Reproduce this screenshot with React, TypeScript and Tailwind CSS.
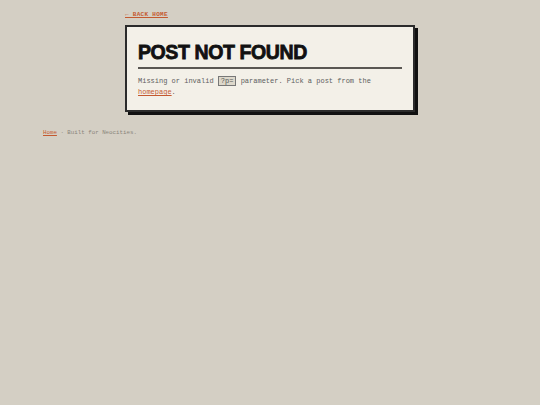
import React from "react";

export default function App() {
  const mono = { fontFamily: '"Liberation Mono", "Courier New", monospace' };
  return (
    <div className="min-h-[405px] w-full bg-[#d4cfc4]" style={mono}>
      <div className="mx-auto w-[290px] pt-[11px]">
        <a className="block text-[6px] leading-[8px] font-bold tracking-[0.3px] text-[#c4592f] underline underline-offset-[1px]">
          ← BACK HOME
        </a>
        <div className="mt-[6px] w-[290px] border-2 border-[#2b2b2b] bg-[#f3f0e8] px-[11px] pt-[14px] pb-[12px] shadow-[3px_3px_0_#111]">
          <h1
            className="text-[19.5px] leading-[22px] font-bold text-[#111] tracking-[-0.4px]"
            style={{ fontFamily: '"Liberation Sans", Arial, sans-serif', WebkitTextStroke: "0.8px #111" }}
          >
            POST NOT FOUND
          </h1>
          <div className="mt-[4px] h-[2px] bg-[#5a5753]" />
          <p className="mt-[7px] text-[7px] leading-[11px] text-[#606060]">
            Missing or invalid{" "}
            <code className="border border-[#777] bg-[#ddd8cb] px-[2px] text-[#555]">?p=</code>{" "}
            parameter. Pick a post from the{" "}
            <a className="text-[#c4592f] underline">homepage</a>.
          </p>
        </div>
      </div>
      <div className="mx-auto w-[454px] pt-[17px] text-[5.8px] leading-[8px] text-[#8a857b]">
        <a className="text-[#c4592f] underline">Home</a> · Built for Neocities.
      </div>
    </div>
  );
}
